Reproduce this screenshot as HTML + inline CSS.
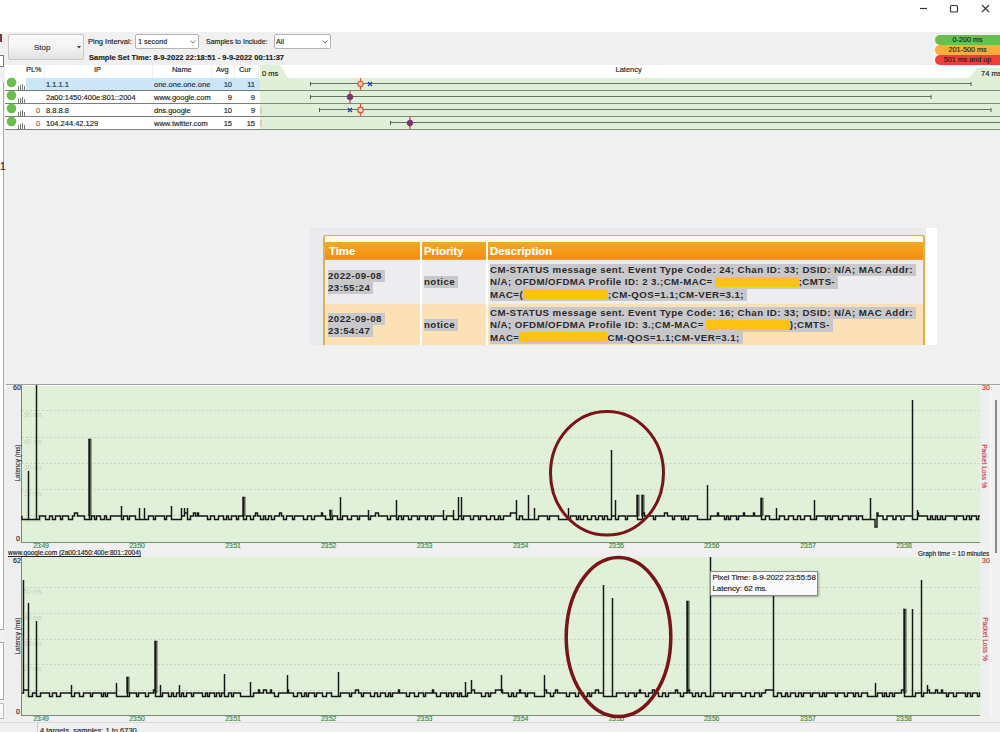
<!DOCTYPE html>
<html><head><meta charset="utf-8">
<style>
*{margin:0;padding:0;box-sizing:border-box}
html,body{width:1000px;height:732px;overflow:hidden;background:#f0f0f0;font-family:"Liberation Sans",sans-serif;color:#222}
.a{position:absolute}
.t{position:absolute;white-space:nowrap;font-size:10px;line-height:12px;-webkit-text-stroke:0.15px currentColor}
.xl{position:absolute;width:30px;text-align:center;font-size:7px;letter-spacing:-0.5px;line-height:9px;color:#3a863a;-webkit-text-stroke:0.1px currentColor}
.gl{stroke:#bfcab7;stroke-width:1;stroke-dasharray:1.5 2.5}
.gll{position:absolute;font-size:6.5px;line-height:8px;color:#c6d0bd;white-space:nowrap}
.row{position:absolute;left:5px;width:255px;height:13px;border-bottom:1px solid #7d7d7d}
.ov{font-family:"Liberation Sans",sans-serif;font-weight:bold;font-size:10.5px;line-height:12.5px;color:#333}
.ol{position:absolute;white-space:nowrap;font-weight:bold;font-size:9.7px;letter-spacing:0.43px;line-height:12.3px;color:#2a2a2a}
.hl{display:inline-block;background:#c8c8cb;height:12.3px}
.yb{display:inline-block;background:#fcc314;height:10px;vertical-align:-1.5px}
</style></head><body>
<!-- title bar -->
<div class="a" style="left:0;top:0;width:1000px;height:32px;background:#fff"></div>
<svg class="a" style="left:0;top:0" width="1000" height="32">
<line x1="920" y1="8.5" x2="927" y2="8.5" stroke="#333" stroke-width="1.2"/>
<rect x="950.5" y="5.5" width="7" height="6.5" rx="1" fill="none" stroke="#333" stroke-width="1.2"/>
<path d="M982,5 L989,12 M989,5 L982,12" stroke="#333" stroke-width="1.1"/>
</svg>
<!-- left strip -->
<div class="a" style="left:0;top:34px;width:2px;height:8px;background:#7a3a3a"></div>
<div class="a" style="left:-2px;top:55px;width:6px;height:12px;background:#fff;border:1px solid #777"></div>
<div class="a" style="left:0;top:82px;width:4px;height:548px;background:#fff;border-right:1px solid #aaa;border-bottom:1px solid #aaa"></div>
<div class="a" style="left:0;top:642px;width:4px;height:58px;background:#fff;border-right:1px solid #aaa;border-top:1px solid #aaa;border-bottom:1px solid #aaa"></div>
<div class="a" style="left:0;top:703px;width:4px;height:16px;background:#f8f8f8;border-right:1px solid #bbb;border-top:1px solid #bbb;border-bottom:1px solid #bbb"></div>
<div class="t" style="left:0;top:161px;font-size:10px">1</div>
<!-- toolbar -->
<div class="a" style="left:8px;top:34px;width:76px;height:26px;border:1px solid #c8c8c8;border-radius:2px;background:linear-gradient(#fafafa,#f4f4f4 50%,#e2e2e2)"></div>
<div class="t" style="left:34px;top:43px;font-size:8px;line-height:10px;color:#333">Stop</div>
<svg class="a" style="left:77px;top:46px" width="5" height="3"><path d="M0,0 L4,0 L2,2.5z" fill="#333"/></svg>
<div class="t" style="left:88px;top:37px;font-size:7.5px;line-height:10px;color:#222">Ping Interval:</div>
<div class="a" style="left:135px;top:34px;width:64px;height:14.5px;background:#fff;border:1px solid #b4b4b4;border-radius:2px"></div>
<div class="t" style="left:138px;top:37px;font-size:7.2px;line-height:10px;color:#222">1 second</div>
<svg class="a" style="left:190px;top:40px" width="7" height="4"><path d="M0.5,0.5 L3,3 L5.5,0.5" fill="none" stroke="#666" stroke-width="0.9"/></svg>
<div class="t" style="left:206px;top:37px;font-size:7px;line-height:10px;color:#222">Samples to Include:</div>
<div class="a" style="left:274px;top:34px;width:57px;height:14.5px;background:#fff;border:1px solid #b4b4b4;border-radius:2px"></div>
<div class="t" style="left:276px;top:37px;font-size:7.2px;line-height:10px;color:#222">All</div>
<svg class="a" style="left:322px;top:40px" width="7" height="4"><path d="M0.5,0.5 L3,3 L5.5,0.5" fill="none" stroke="#666" stroke-width="0.9"/></svg>
<div class="t" style="left:89px;top:53px;font-weight:bold;color:#222;font-size:7.5px;line-height:10px">Sample Set Time: 8-9-2022 22:18:51 - 9-9-2022 00:11:37</div>
<!-- badges -->
<div class="a" style="left:935px;top:35px;width:70px;height:10px;border-radius:5px;background:#6cbd4f"></div>
<div class="a" style="left:935px;top:45px;width:70px;height:10px;border-radius:5px;background:#fbae3c"></div>
<div class="a" style="left:935px;top:55px;width:70px;height:10px;border-radius:5px;background:#ee4038"></div>
<div class="t" style="left:935px;top:34px;width:65px;text-align:center;font-size:7.2px;line-height:11px;color:#222">0-200 ms</div>
<div class="t" style="left:935px;top:44px;width:65px;text-align:center;font-size:7.2px;line-height:11px;color:#222">201-500 ms</div>
<div class="t" style="left:935px;top:54px;width:65px;text-align:center;font-size:7.2px;line-height:11px;color:#222">501 ms and up</div>
<!-- table header -->
<div class="a" style="left:5px;top:65px;width:995px;height:13px;background:#fff"></div>
<div class="a" style="left:44px;top:65px;width:1px;height:13px;background:#eee"></div>
<div class="a" style="left:152px;top:65px;width:1px;height:13px;background:#eee"></div>
<div class="a" style="left:211px;top:65px;width:1px;height:13px;background:#eee"></div>
<div class="a" style="left:234px;top:65px;width:1px;height:13px;background:#eee"></div>
<div class="a" style="left:258px;top:65px;width:1px;height:13px;background:#eee"></div>
<div class="t" style="left:26px;top:63px;font-size:7.4px;line-height:13px;color:#222">PL%</div>
<div class="t" style="left:94px;top:63px;font-size:7.4px;line-height:13px;color:#222">IP</div>
<div class="t" style="left:172px;top:63px;font-size:7.4px;line-height:13px;color:#222">Name</div>
<div class="t" style="left:216px;top:63px;font-size:7.4px;line-height:13px;color:#222">Avg</div>
<div class="t" style="left:239px;top:63px;font-size:7.4px;line-height:13px;color:#222">Cur</div>
<!-- latency area -->
<svg class="a" style="left:0;top:60px" width="1000" height="75">
<path d="M260,5 L280,5 L288,18 L969,18 L977,8 L1000,8 L1000,69 L260,69z" fill="#e0efd8"/>
<line x1="260" y1="30.5" x2="1000" y2="30.5" stroke="#7e8a7a" stroke-width="1"/>
<line x1="260" y1="43.5" x2="1000" y2="43.5" stroke="#7e8a7a" stroke-width="1"/>
<line x1="260" y1="56.5" x2="1000" y2="56.5" stroke="#7e8a7a" stroke-width="1"/>
<line x1="260" y1="69.5" x2="1000" y2="69.5" stroke="#7e8a7a" stroke-width="1"/>
<line x1="310" y1="23.5" x2="971" y2="23.5" stroke="#667466" stroke-width="1"/>
<line x1="310" y1="36.5" x2="931" y2="36.5" stroke="#667466" stroke-width="1"/>
<line x1="319" y1="49.5" x2="991" y2="49.5" stroke="#667466" stroke-width="1"/>
<line x1="390" y1="62.5" x2="1000" y2="62.5" stroke="#667466" stroke-width="1"/>
<path d="M310.5,22 v4 M971,22 v4 M310.5,35 v4 M931,35 v4 M319.5,48 v4 M991,48 v4 M390.5,61 v4" stroke="#555" stroke-width="1"/>
<line x1="261" y1="47" x2="261" y2="54" stroke="#d8a8a0" stroke-width="1"/>
<line x1="261" y1="60" x2="261" y2="67" stroke="#d8a8a0" stroke-width="1"/>
<!-- markers -->
<line x1="360.5" y1="18" x2="360.5" y2="30" stroke="#e05030" stroke-width="1.2"/>
<circle cx="360.5" cy="24" r="2.7" fill="#f8d0b8" stroke="#e05030" stroke-width="1.1"/>
<path d="M368,22 L372,26 M372,22 L368,26" stroke="#2040b0" stroke-width="1.3"/>
<line x1="350" y1="31" x2="350" y2="43" stroke="#c04040" stroke-width="1.2"/>
<circle cx="350" cy="37" r="2.8" fill="#6a3a7a" stroke="#8a3060" stroke-width="1"/>
<path d="M348,48 L352,52 M352,48 L348,52" stroke="#2040b0" stroke-width="1.3"/>
<line x1="360.5" y1="44" x2="360.5" y2="56" stroke="#e05030" stroke-width="1.2"/>
<circle cx="360.5" cy="50" r="2.8" fill="#f8d8c8" stroke="#e05030" stroke-width="1.2"/>
<line x1="410" y1="57" x2="410" y2="69" stroke="#c04040" stroke-width="1.2"/>
<circle cx="410" cy="63" r="2.8" fill="#6a3a7a" stroke="#8a3060" stroke-width="1"/>
</svg>
<div class="t" style="left:262px;top:67px;font-size:7.5px;line-height:13px;color:#222">0 ms</div>
<div class="t" style="left:981px;top:67px;font-size:7.5px;line-height:13px;color:#222">74 ms</div>
<div class="t" style="left:615.5px;top:63px;font-size:7.5px;line-height:13px;color:#222">Latency</div>
<!-- rows -->
<div class="a" style="left:26px;top:78px;width:234px;height:12px;background:#cde6f7"></div>
<div class="a" style="left:5px;top:90px;width:255px;height:1px;background:#7d7d7d"></div>
<div class="a" style="left:5px;top:103px;width:255px;height:1px;background:#7d7d7d"></div>
<div class="a" style="left:5px;top:116px;width:255px;height:1px;background:#7d7d7d"></div>
<div class="a" style="left:5px;top:129px;width:255px;height:1px;background:#7d7d7d"></div>
<div class="a" style="left:5px;top:91px;width:255px;height:12px;background:#fff"></div>
<div class="a" style="left:5px;top:104px;width:255px;height:12px;background:#fff"></div>
<div class="a" style="left:5px;top:117px;width:255px;height:12px;background:#fff"></div>
<div class="a" style="left:5px;top:78px;width:21px;height:12px;background:#fff"></div>
<svg class="a" style="left:0;top:75px" width="30" height="60">
<g fill="#6abf4b"><circle cx="11.5" cy="7.5" r="4.8"/><circle cx="11.5" cy="20.5" r="4.8"/><circle cx="11.5" cy="33.5" r="4.8"/><circle cx="11.5" cy="46.5" r="4.8"/></g>
<g stroke="#777" stroke-width="1">
<path d="M18.5,15 v-4 M20.5,15 v-5 M22.5,15 v-6 M24.5,15 v-4"/>
<path d="M18.5,28 v-4 M20.5,28 v-5 M22.5,28 v-6 M24.5,28 v-4"/>
<path d="M18.5,41 v-4 M20.5,41 v-5 M22.5,41 v-6 M24.5,41 v-4"/>
<path d="M18.5,54 v-4 M20.5,54 v-5 M22.5,54 v-6 M24.5,54 v-4"/>
</g></svg>
<div class="t" style="left:46px;top:78px;font-size:7.5px;line-height:13px;color:#1a3050">1.1.1.1</div>
<div class="t" style="left:154px;top:78px;font-size:7.5px;line-height:13px;color:#1a3050">one.one.one.one</div>
<div class="t" style="left:212px;top:78px;width:20px;text-align:right;font-size:7.5px;line-height:13px;color:#1a3050">10</div>
<div class="t" style="left:235px;top:78px;width:20px;text-align:right;font-size:7.5px;line-height:13px;color:#1a3050">11</div>
<div class="t" style="left:46px;top:91px;font-size:7.5px;line-height:13px;color:#222">2a00:1450:400e:801::2004</div>
<div class="t" style="left:154px;top:91px;font-size:7.5px;line-height:13px;color:#222">www.google.com</div>
<div class="t" style="left:212px;top:91px;width:20px;text-align:right;font-size:7.5px;line-height:13px;color:#222">9</div>
<div class="t" style="left:235px;top:91px;width:20px;text-align:right;font-size:7.5px;line-height:13px;color:#222">9</div>
<div class="t" style="left:36px;top:104px;font-size:7.5px;line-height:13px;color:#a05050">0</div>
<div class="t" style="left:46px;top:104px;font-size:7.5px;line-height:13px;color:#222">8.8.8.8</div>
<div class="t" style="left:154px;top:104px;font-size:7.5px;line-height:13px;color:#222">dns.google</div>
<div class="t" style="left:212px;top:104px;width:20px;text-align:right;font-size:7.5px;line-height:13px;color:#222">10</div>
<div class="t" style="left:235px;top:104px;width:20px;text-align:right;font-size:7.5px;line-height:13px;color:#222">9</div>
<div class="t" style="left:36px;top:117px;font-size:7.5px;line-height:13px;color:#a05050">0</div>
<div class="t" style="left:46px;top:117px;font-size:7.5px;line-height:13px;color:#222">104.244.42.129</div>
<div class="t" style="left:154px;top:117px;font-size:7.5px;line-height:13px;color:#222">www.twitter.com</div>
<div class="t" style="left:212px;top:117px;width:20px;text-align:right;font-size:7.5px;line-height:13px;color:#222">15</div>
<div class="t" style="left:235px;top:117px;width:20px;text-align:right;font-size:7.5px;line-height:13px;color:#222">15</div>

<!-- overlay -->
<div class="a" style="left:310px;top:228px;width:627px;height:117px;background:#e9eaee"></div>
<div class="a" style="left:926px;top:228px;width:11px;height:117px;background:#fff"></div>
<div class="a" style="left:323px;top:235px;width:602px;height:110px;border:2px solid #dcb058;border-top:1.5px solid #cfae5c;border-bottom:none;border-radius:3px 3px 0 0;background:#fffbe6"></div>
<div class="a" style="left:325px;top:242px;width:598px;height:18px;background:linear-gradient(#eeac1f,#f6981a 60%,#f38d12);border-bottom:1px solid #e8a050"></div>
<div class="a" style="left:325px;top:260px;width:598px;height:44px;background:#ededf0"></div>
<div class="a" style="left:325px;top:304px;width:598px;height:41px;background:#fde1b6"></div>
<div class="a" style="left:420px;top:241px;width:2px;height:104px;background:#fff"></div>
<div class="a" style="left:486px;top:241px;width:2px;height:104px;background:#fff"></div>
<div class="t ov" style="left:329px;top:244px;font-size:11.3px;line-height:14px;color:#fff">Time</div>
<div class="t ov" style="left:424px;top:244px;font-size:11.3px;line-height:14px;color:#fff">Priority</div>
<div class="t ov" style="left:490px;top:244px;font-size:11.3px;line-height:14px;color:#fff">Description</div>
<div class="ol" style="left:328px;top:270px"><span class="hl">2022-09-08&nbsp;</span></div>
<div class="ol" style="left:328px;top:282px"><span class="hl">23:55:24&nbsp;</span></div>
<div class="ol" style="left:424px;top:276px"><span class="hl">notice&nbsp;</span></div>
<div class="ol" style="left:490px;top:264px"><span class="hl">CM-STATUS message sent. Event Type Code: 24; Chan ID: 33; DSID: N/A; MAC Addr:&nbsp;</span></div>
<div class="ol" style="left:490px;top:276.3px"><span class="hl">N/A; OFDM/OFDMA Profile ID: 2 3.;CM-MAC=<span class="yb" style="width:84px;margin-left:2px"></span>;CMTS-&nbsp;</span></div>
<div class="ol" style="left:490px;top:288.6px"><span class="hl">MAC=(<span class="yb" style="width:85px"></span>;CM-QOS=1.1;CM-VER=3.1;&nbsp;</span></div>
<div class="ol" style="left:328px;top:313px"><span class="hl">2022-09-08&nbsp;</span></div>
<div class="ol" style="left:328px;top:325px"><span class="hl">23:54:47&nbsp;</span></div>
<div class="ol" style="left:424px;top:319px"><span class="hl">notice&nbsp;</span></div>
<div class="ol" style="left:490px;top:307px"><span class="hl">CM-STATUS message sent. Event Type Code: 16; Chan ID: 33; DSID: N/A; MAC Addr:&nbsp;</span></div>
<div class="ol" style="left:490px;top:319.3px"><span class="hl">N/A; OFDM/OFDMA Profile ID: 3.;CM-MAC=<span class="yb" style="width:84px;margin-left:2px"></span>);CMTS-&nbsp;</span></div>
<div class="ol" style="left:490px;top:331.6px"><span class="hl">MAC=<span class="yb" style="width:88px"></span>CM-QOS=1.1;CM-VER=3.1;&nbsp;</span></div>

<!-- graph 1 -->
<div class="a" style="left:6px;top:384px;width:994px;height:1px;background:#a0a0a0"></div>
<div class="a" style="left:990px;top:385px;width:1px;height:331px;background:#fafafa"></div>
<div class="a" style="left:6px;top:385px;width:984px;height:158px;background:#eeeeee"></div>
<div class="a" style="left:21px;top:385px;width:959px;height:157px;background:#e1f0d9"></div>
<div class="a" style="left:6px;top:385px;width:994px;height:1px;background:#fbfbfb"></div>
<div class="gll" style="left:24px;top:411px">50 ms</div><div class="gll" style="left:24px;top:438px">40 ms</div><div class="gll" style="left:24px;top:464px">30 ms</div><div class="gll" style="left:24px;top:490px">20 ms</div><div class="gll" style="left:24px;top:516px">10 ms</div>
<div class="a" style="left:6px;top:557px;width:984px;height:159px;background:#eeeeee"></div>
<div class="a" style="left:21px;top:557px;width:959px;height:158px;background:#e1f0d9"></div>
<div class="gll" style="left:24px;top:588px">50 ms</div><div class="gll" style="left:24px;top:614px">40 ms</div><div class="gll" style="left:24px;top:640px">30 ms</div><div class="gll" style="left:24px;top:665px">20 ms</div><div class="gll" style="left:24px;top:691px">10 ms</div>
<svg class="a" style="left:0;top:0" width="1000" height="732">
<line x1="22" y1="410.5" x2="980" y2="410.5" class="gl"/><line x1="22" y1="437.5" x2="980" y2="437.5" class="gl"/><line x1="22" y1="463.5" x2="980" y2="463.5" class="gl"/><line x1="22" y1="489.5" x2="980" y2="489.5" class="gl"/><line x1="22" y1="515.5" x2="980" y2="515.5" class="gl"/>
<line x1="22" y1="587.5" x2="980" y2="587.5" class="gl"/><line x1="22" y1="613.5" x2="980" y2="613.5" class="gl"/><line x1="22" y1="639.5" x2="980" y2="639.5" class="gl"/><line x1="22" y1="664.5" x2="980" y2="664.5" class="gl"/><line x1="22" y1="690.5" x2="980" y2="690.5" class="gl"/>
<line x1="21.5" y1="385" x2="21.5" y2="543" stroke="#7a8a7a"/>
<line x1="21" y1="542.5" x2="980" y2="542.5" stroke="#7a8a7a"/>
<line x1="21.5" y1="557" x2="21.5" y2="716" stroke="#7a8a7a"/>
<line x1="21" y1="715.5" x2="980" y2="715.5" stroke="#7a8a7a"/>
</svg>
<div class="t" style="left:13px;top:384px;font-size:7px;line-height:8px;color:#222">60</div>
<div class="t" style="left:16px;top:535px;font-size:7px;line-height:8px;color:#222">0</div>
<div class="t" style="left:982px;top:384px;font-size:7px;line-height:8px;color:#a54040">30</div>
<div class="t" style="left:-7.5px;top:459px;width:50px;text-align:center;font-size:6.4px;line-height:8px;color:#333;transform:rotate(-90deg)">Latency (ms)</div>
<div class="t" style="left:959px;top:462px;width:50px;text-align:center;font-size:6.6px;line-height:8px;color:#c04545;transform:rotate(90deg)">Packet Loss %</div>
<div class="xl" style="left:25.799999999999997px;top:541px">23:49</div><div class="xl" style="left:121.80000000000001px;top:541px">23:50</div><div class="xl" style="left:217.8px;top:541px">23:51</div><div class="xl" style="left:313.4px;top:541px">23:52</div><div class="xl" style="left:409.3px;top:541px">23:53</div><div class="xl" style="left:505.4px;top:541px">23:54</div><div class="xl" style="left:601.2px;top:541px">23:55</div><div class="xl" style="left:696.4px;top:541px">23:56</div><div class="xl" style="left:792.8px;top:541px">23:57</div><div class="xl" style="left:888.8px;top:541px">23:58</div>
<div class="t" style="left:8px;top:548px;font-size:6.5px;line-height:9px;color:#222;text-decoration:underline">www.google.com (2a00:1450:400e:801::2004)</div>
<div class="t" style="left:918px;top:549px;font-size:6.5px;line-height:9px;color:#222">Graph time = 10 minutes</div>
<!-- graph 2 -->
<div class="t" style="left:13px;top:557px;font-size:7px;line-height:8px;color:#222">62</div>
<div class="t" style="left:16px;top:708px;font-size:7px;line-height:8px;color:#222">0</div>
<div class="t" style="left:982px;top:557px;font-size:7px;line-height:8px;color:#a54040">30</div>
<div class="t" style="left:-7.5px;top:631.7px;width:50px;text-align:center;font-size:6.4px;line-height:8px;color:#333;transform:rotate(-90deg)">Latency (ms)</div>
<div class="t" style="left:959.5px;top:634.7px;width:50px;text-align:center;font-size:6.6px;line-height:8px;color:#c04545;transform:rotate(90deg)">Packet Loss %</div>
<div class="xl" style="left:25.799999999999997px;top:714px">23:49</div><div class="xl" style="left:121.80000000000001px;top:714px">23:50</div><div class="xl" style="left:217.8px;top:714px">23:51</div><div class="xl" style="left:313.4px;top:714px">23:52</div><div class="xl" style="left:409.3px;top:714px">23:53</div><div class="xl" style="left:505.4px;top:714px">23:54</div><div class="xl" style="left:601.2px;top:714px">23:55</div><div class="xl" style="left:696.4px;top:714px">23:56</div><div class="xl" style="left:792.8px;top:714px">23:57</div><div class="xl" style="left:888.8px;top:714px">23:58</div>
<svg class="a" style="left:0;top:0" width="1000" height="732">
<g class="gls"></g>
<rect x="88.4" y="439" width="2.7" height="77.0" fill="#858b80" stroke="#333" stroke-width="0.6"/><rect x="242.4" y="497" width="2.7" height="19.0" fill="#858b80" stroke="#333" stroke-width="0.6"/><rect x="329.4" y="510" width="2.7" height="6.0" fill="#858b80" stroke="#333" stroke-width="0.6"/><rect x="636.4" y="495" width="2.7" height="21.0" fill="#858b80" stroke="#333" stroke-width="0.6"/><rect x="641.4" y="495" width="2.7" height="21.0" fill="#858b80" stroke="#333" stroke-width="0.6"/><rect x="760.4" y="498" width="2.7" height="18.0" fill="#858b80" stroke="#333" stroke-width="0.6"/><rect x="126.4" y="677" width="2.7" height="16.0" fill="#858b80" stroke="#333" stroke-width="0.6"/><rect x="154.4" y="641" width="2.7" height="52.0" fill="#858b80" stroke="#333" stroke-width="0.6"/><rect x="686.4" y="601" width="2.7" height="92.0" fill="#858b80" stroke="#333" stroke-width="0.6"/><rect x="903.4" y="609" width="2.7" height="84.0" fill="#858b80" stroke="#333" stroke-width="0.6"/>
<path d="M22.0,516.0 L22.0,519.5 L24.0,519.5 L28.5,519.5 L28.5,471.0 L28.5,516.0 L28.5,516.0 L28.5,519.5 L30.5,519.5 L36.5,519.5 L36.5,385.0 L36.5,516.0 L36.5,516.0 L36.5,519.5 L39.5,519.5 L39.5,516.0 L45.5,516.0 L45.5,519.5 L49.5,519.5 L49.5,516.0 L52.5,516.0 L52.5,519.5 L55.5,519.5 L55.5,516.0 L60.5,516.0 L60.5,519.5 L62.5,519.5 L62.5,516.0 L68.5,516.0 L68.5,519.5 L72.5,519.5 L72.5,516.0 L74.5,516.0 L74.5,513.0 L77.5,513.0 L77.5,516.0 L84.5,516.0 L84.5,519.5 L86.5,519.5 L89.5,519.5 L89.5,439.0 L89.5,516.0 L89.5,516.0 L89.5,519.5 L91.5,519.5 L91.5,516.0 L94.5,516.0 L94.5,519.5 L96.5,519.5 L96.5,516.0 L100.5,516.0 L100.5,519.5 L104.5,519.5 L104.5,516.0 L106.5,516.0 L106.5,519.5 L110.5,519.5 L110.5,516.0 L119.5,516.0 L121.5,516.0 L121.5,506.0 L121.5,516.0 L121.5,516.0 L121.5,519.5 L123.5,519.5 L123.5,516.0 L127.5,516.0 L127.5,519.5 L129.5,519.5 L129.5,516.0 L135.5,516.0 L135.5,519.5 L137.5,519.5 L139.5,519.5 L139.5,508.0 L139.5,516.0 L139.5,516.0 L139.5,519.5 L142.5,519.5 L144.5,519.5 L144.5,508.0 L144.5,516.0 L144.5,516.0 L144.5,519.5 L148.5,519.5 L148.5,516.0 L153.5,516.0 L153.5,519.5 L155.5,519.5 L155.5,516.0 L164.5,516.0 L164.5,519.5 L166.5,519.5 L166.5,516.0 L168.5,516.0 L171.5,516.0 L171.5,506.0 L171.5,516.0 L171.5,516.0 L171.5,519.5 L174.5,519.5 L181.5,519.5 L181.5,508.0 L181.5,516.0 L181.5,516.0 L184.5,516.0 L184.5,508.0 L184.5,516.0 L184.5,516.0 L184.5,513.0 L185.5,513.0 L187.5,513.0 L187.5,508.0 L187.5,516.0 L187.5,516.0 L187.5,519.5 L190.5,519.5 L190.5,516.0 L193.5,516.0 L193.5,513.0 L195.5,513.0 L195.5,516.0 L197.5,516.0 L197.5,513.0 L198.5,513.0 L198.5,516.0 L207.5,516.0 L207.5,519.5 L210.5,519.5 L210.5,516.0 L214.5,516.0 L214.5,519.5 L218.5,519.5 L218.5,516.0 L223.5,516.0 L223.5,519.5 L226.5,519.5 L226.5,516.0 L228.5,516.0 L228.5,519.5 L231.5,519.5 L231.5,516.0 L236.5,516.0 L236.5,519.5 L238.5,519.5 L238.5,516.0 L240.5,516.0 L243.5,516.0 L243.5,497.0 L243.5,516.0 L243.5,516.0 L243.5,519.5 L246.5,519.5 L246.5,516.0 L250.5,516.0 L250.5,519.5 L253.5,519.5 L253.5,516.0 L255.5,516.0 L255.5,513.0 L257.5,513.0 L257.5,516.0 L260.5,516.0 L260.5,519.5 L263.5,519.5 L263.5,516.0 L265.5,516.0 L265.5,519.5 L268.5,519.5 L268.5,516.0 L271.5,516.0 L271.5,519.5 L274.5,519.5 L274.5,516.0 L279.5,516.0 L279.5,513.0 L281.5,513.0 L281.5,516.0 L283.5,516.0 L283.5,519.5 L286.5,519.5 L286.5,516.0 L292.5,516.0 L292.5,519.5 L294.5,519.5 L294.5,516.0 L303.5,516.0 L303.5,519.5 L307.5,519.5 L307.5,516.0 L311.5,516.0 L311.5,519.5 L314.5,519.5 L314.5,516.0 L321.5,516.0 L321.5,513.0 L322.5,513.0 L322.5,516.0 L325.5,516.0 L325.5,519.5 L327.5,519.5 L330.5,519.5 L330.5,510.0 L330.5,516.0 L330.5,516.0 L330.5,519.5 L332.5,519.5 L332.5,516.0 L337.5,516.0 L337.5,519.5 L339.5,519.5 L340.5,519.5 L340.5,497.0 L340.5,516.0 L340.5,516.0 L340.5,519.5 L342.5,519.5 L342.5,516.0 L347.5,516.0 L347.5,519.5 L351.5,519.5 L351.5,516.0 L357.5,516.0 L357.5,519.5 L359.5,519.5 L359.5,516.0 L366.5,516.0 L368.5,516.0 L368.5,510.0 L368.5,516.0 L368.5,516.0 L368.5,519.5 L370.5,519.5 L370.5,516.0 L375.5,516.0 L375.5,513.0 L378.5,513.0 L378.5,516.0 L387.5,516.0 L387.5,519.5 L390.5,519.5 L390.5,516.0 L395.5,516.0 L396.5,516.0 L396.5,500.0 L396.5,516.0 L396.5,516.0 L396.5,519.5 L398.5,519.5 L398.5,516.0 L401.5,516.0 L401.5,519.5 L403.5,519.5 L403.5,516.0 L408.5,516.0 L408.5,519.5 L411.5,519.5 L411.5,516.0 L417.5,516.0 L417.5,519.5 L419.5,519.5 L419.5,516.0 L425.5,516.0 L425.5,519.5 L427.5,519.5 L427.5,516.0 L431.5,516.0 L431.5,519.5 L433.5,519.5 L433.5,516.0 L442.5,516.0 L443.5,516.0 L443.5,510.0 L443.5,516.0 L443.5,516.0 L443.5,519.5 L446.5,519.5 L446.5,516.0 L450.5,516.0 L453.5,516.0 L453.5,510.0 L453.5,516.0 L453.5,516.0 L453.5,519.5 L456.5,519.5 L458.5,519.5 L458.5,497.0 L458.5,516.0 L458.5,516.0 L461.5,516.0 L461.5,497.0 L461.5,516.0 L461.5,516.0 L461.5,519.5 L463.5,519.5 L463.5,516.0 L470.5,516.0 L470.5,519.5 L473.5,519.5 L473.5,516.0 L478.5,516.0 L478.5,519.5 L480.5,519.5 L480.5,516.0 L486.5,516.0 L486.5,519.5 L490.5,519.5 L490.5,516.0 L494.5,516.0 L494.5,519.5 L498.5,519.5 L498.5,516.0 L500.5,516.0 L500.5,519.5 L503.5,519.5 L503.5,516.0 L510.5,516.0 L510.5,513.0 L513.5,513.0 L516.5,513.0 L516.5,500.0 L516.5,516.0 L516.5,516.0 L516.5,519.5 L519.5,519.5 L519.5,516.0 L522.5,516.0 L522.5,519.5 L524.5,519.5 L528.5,519.5 L528.5,495.0 L528.5,516.0 L528.5,516.0 L528.5,519.5 L532.5,519.5 L534.5,519.5 L534.5,508.0 L534.5,516.0 L534.5,516.0 L534.5,519.5 L538.5,519.5 L538.5,516.0 L547.5,516.0 L547.5,519.5 L549.5,519.5 L549.5,516.0 L558.5,516.0 L558.5,519.5 L561.5,519.5 L568.5,519.5 L568.5,508.0 L568.5,516.0 L568.5,516.0 L568.5,519.5 L570.5,519.5 L570.5,516.0 L576.5,516.0 L576.5,519.5 L578.5,519.5 L578.5,516.0 L580.5,516.0 L580.5,519.5 L583.5,519.5 L583.5,516.0 L587.5,516.0 L587.5,519.5 L591.5,519.5 L591.5,516.0 L595.5,516.0 L595.5,519.5 L598.5,519.5 L598.5,516.0 L602.5,516.0 L602.5,519.5 L604.5,519.5 L604.5,516.0 L607.5,516.0 L607.5,519.5 L610.5,519.5 L611.5,519.5 L611.5,450.0 L611.5,516.0 L611.5,516.0 L615.5,516.0 L615.5,500.0 L615.5,516.0 L615.5,516.0 L615.5,519.5 L618.5,519.5 L618.5,516.0 L625.5,516.0 L625.5,519.5 L627.5,519.5 L627.5,516.0 L636.5,516.0 L637.5,516.0 L637.5,495.0 L637.5,516.0 L637.5,516.0 L637.5,519.5 L639.5,519.5 L642.5,519.5 L642.5,495.0 L642.5,516.0 L642.5,516.0 L642.5,513.0 L644.5,513.0 L644.5,516.0 L653.5,516.0 L653.5,519.5 L655.5,519.5 L655.5,516.0 L664.5,516.0 L664.5,513.0 L667.5,513.0 L667.5,516.0 L672.5,516.0 L672.5,519.5 L674.5,519.5 L674.5,516.0 L681.5,516.0 L681.5,519.5 L683.5,519.5 L683.5,516.0 L685.5,516.0 L685.5,519.5 L688.5,519.5 L688.5,516.0 L697.5,516.0 L697.5,519.5 L701.5,519.5 L707.5,519.5 L707.5,485.0 L707.5,516.0 L707.5,516.0 L707.5,519.5 L710.5,519.5 L710.5,516.0 L717.5,516.0 L717.5,513.0 L718.5,513.0 L718.5,516.0 L724.5,516.0 L724.5,519.5 L726.5,519.5 L726.5,516.0 L728.5,516.0 L728.5,519.5 L730.5,519.5 L730.5,516.0 L736.5,516.0 L736.5,519.5 L738.5,519.5 L738.5,516.0 L743.5,516.0 L743.5,513.0 L744.5,513.0 L744.5,516.0 L753.5,516.0 L753.5,513.0 L754.5,513.0 L754.5,516.0 L758.5,516.0 L761.5,516.0 L761.5,498.0 L761.5,516.0 L761.5,516.0 L761.5,519.5 L765.5,519.5 L765.5,516.0 L769.5,516.0 L769.5,519.5 L772.5,519.5 L776.5,519.5 L776.5,508.0 L776.5,516.0 L776.5,516.0 L776.5,519.5 L779.5,519.5 L779.5,516.0 L784.5,516.0 L784.5,519.5 L788.5,519.5 L788.5,516.0 L793.5,516.0 L793.5,519.5 L797.5,519.5 L797.5,516.0 L800.5,516.0 L800.5,519.5 L804.5,519.5 L804.5,516.0 L810.5,516.0 L810.5,519.5 L813.5,519.5 L814.5,519.5 L814.5,500.0 L814.5,516.0 L814.5,516.0 L814.5,519.5 L816.5,519.5 L816.5,516.0 L825.5,516.0 L825.5,519.5 L827.5,519.5 L827.5,516.0 L830.5,516.0 L830.5,519.5 L832.5,519.5 L832.5,516.0 L838.5,516.0 L838.5,519.5 L842.5,519.5 L842.5,516.0 L848.5,516.0 L848.5,519.5 L850.5,519.5 L850.5,516.0 L856.5,516.0 L856.5,519.5 L858.5,519.5 L858.5,516.0 L862.5,516.0 L862.5,519.5 L864.5,519.5 L870.5,519.5 L870.5,498.0 L870.5,516.0 L870.5,516.0 L870.5,519.5 L872.5,519.5 L875.0,519.5 L875.0,527.0 L877.0,527.0 L877.0,516.0 L877.0,513.0 L878.0,513.0 L878.0,516.0 L883.0,516.0 L883.0,519.5 L887.0,519.5 L887.0,516.0 L893.0,516.0 L893.0,519.5 L896.0,519.5 L896.0,516.0 L901.0,516.0 L901.0,519.5 L904.0,519.5 L904.0,516.0 L910.0,516.0 L912.5,516.0 L912.5,400.0 L912.5,516.0 L912.5,516.0 L912.5,519.5 L915.5,519.5 L917.5,519.5 L917.5,510.0 L917.5,516.0 L917.5,516.0 L917.5,513.0 L918.5,513.0 L918.5,516.0 L927.5,516.0 L927.5,519.5 L930.5,519.5 L930.5,516.0 L932.5,516.0 L932.5,519.5 L935.5,519.5 L935.5,516.0 L937.5,516.0 L937.5,519.5 L940.5,519.5 L940.5,516.0 L942.5,516.0 L942.5,519.5 L945.5,519.5 L945.5,516.0 L954.5,516.0 L954.5,519.5 L956.5,519.5 L956.5,516.0 L963.5,516.0 L963.5,519.5 L966.5,519.5 L966.5,516.0 L969.5,516.0 L969.5,519.5 L971.5,519.5 L971.5,516.0 L976.5,516.0 L976.5,519.5 L978.5,519.5 L978.5,516.0 L980.0,516.0" fill="none" stroke="#151515" stroke-width="1.45" stroke-linejoin="miter"/>
<path d="M22.0,693.0 L23.5,693.0 L23.5,580.0 L23.5,693.0 L23.5,693.0 L23.5,690.0 L25.5,690.0 L28.5,690.0 L28.5,603.0 L28.5,693.0 L28.5,693.0 L28.5,696.5 L32.5,696.5 L32.5,693.0 L35.5,693.0 L36.5,693.0 L36.5,621.0 L36.5,693.0 L36.5,693.0 L36.5,696.5 L40.5,696.5 L40.5,693.0 L49.5,693.0 L49.5,696.5 L52.5,696.5 L52.5,693.0 L56.5,693.0 L56.5,696.5 L60.5,696.5 L60.5,693.0 L69.5,693.0 L71.5,693.0 L71.5,685.0 L71.5,693.0 L71.5,693.0 L71.5,696.5 L74.5,696.5 L74.5,693.0 L79.5,693.0 L79.5,696.5 L83.5,696.5 L83.5,693.0 L90.5,693.0 L90.5,696.5 L92.5,696.5 L92.5,693.0 L101.5,693.0 L101.5,696.5 L103.5,696.5 L103.5,693.0 L105.5,693.0 L105.5,696.5 L107.5,696.5 L107.5,693.0 L113.5,693.0 L116.5,693.0 L116.5,683.0 L116.5,693.0 L116.5,693.0 L116.5,696.5 L120.5,696.5 L127.5,696.5 L127.5,677.0 L127.5,693.0 L127.5,693.0 L127.5,696.5 L129.5,696.5 L129.5,693.0 L136.5,693.0 L136.5,696.5 L138.5,696.5 L138.5,693.0 L145.5,693.0 L145.5,696.5 L148.5,696.5 L148.5,693.0 L153.5,693.0 L153.5,690.0 L154.5,690.0 L155.5,690.0 L155.5,641.0 L155.5,693.0 L155.5,693.0 L155.5,696.5 L157.5,696.5 L160.5,696.5 L160.5,685.0 L160.5,693.0 L160.5,693.0 L160.5,696.5 L162.5,696.5 L162.5,693.0 L168.5,693.0 L168.5,696.5 L171.5,696.5 L171.5,693.0 L173.5,693.0 L173.5,696.5 L176.5,696.5 L176.5,693.0 L178.5,693.0 L179.5,693.0 L179.5,685.0 L179.5,693.0 L179.5,693.0 L179.5,696.5 L181.5,696.5 L181.5,693.0 L183.5,693.0 L183.5,696.5 L186.5,696.5 L186.5,693.0 L191.5,693.0 L191.5,696.5 L193.5,696.5 L193.5,693.0 L202.5,693.0 L202.5,696.5 L205.5,696.5 L205.5,693.0 L207.5,693.0 L207.5,696.5 L209.5,696.5 L209.5,693.0 L214.5,693.0 L214.5,696.5 L216.5,696.5 L216.5,693.0 L219.5,693.0 L219.5,696.5 L221.5,696.5 L221.5,693.0 L223.5,693.0 L224.5,693.0 L224.5,674.0 L224.5,693.0 L224.5,693.0 L224.5,696.5 L228.5,696.5 L228.5,693.0 L231.5,693.0 L231.5,696.5 L233.5,696.5 L233.5,693.0 L240.5,693.0 L240.5,696.5 L243.5,696.5 L250.5,696.5 L250.5,682.0 L250.5,693.0 L250.5,693.0 L250.5,696.5 L253.5,696.5 L253.5,693.0 L258.5,693.0 L258.5,690.0 L259.5,690.0 L259.5,693.0 L263.5,693.0 L263.5,690.0 L266.5,690.0 L266.5,693.0 L270.5,693.0 L270.5,690.0 L271.5,690.0 L271.5,693.0 L274.5,693.0 L274.5,696.5 L278.5,696.5 L278.5,693.0 L285.5,693.0 L287.5,693.0 L287.5,675.0 L287.5,693.0 L287.5,693.0 L287.5,690.0 L288.5,690.0 L288.5,693.0 L293.5,693.0 L293.5,696.5 L297.5,696.5 L297.5,693.0 L301.5,693.0 L301.5,696.5 L304.5,696.5 L304.5,693.0 L306.5,693.0 L306.5,696.5 L308.5,696.5 L308.5,693.0 L314.5,693.0 L314.5,696.5 L316.5,696.5 L316.5,693.0 L322.5,693.0 L322.5,696.5 L326.5,696.5 L326.5,693.0 L331.5,693.0 L331.5,696.5 L335.5,696.5 L338.5,696.5 L338.5,672.0 L338.5,693.0 L338.5,693.0 L338.5,696.5 L340.5,696.5 L340.5,693.0 L349.5,693.0 L349.5,696.5 L351.5,696.5 L351.5,693.0 L355.5,693.0 L355.5,690.0 L358.5,690.0 L358.5,693.0 L361.5,693.0 L361.5,696.5 L363.5,696.5 L363.5,693.0 L370.5,693.0 L370.5,696.5 L374.5,696.5 L374.5,693.0 L377.5,693.0 L377.5,696.5 L380.5,696.5 L380.5,693.0 L385.5,693.0 L385.5,696.5 L388.5,696.5 L388.5,693.0 L390.5,693.0 L390.5,696.5 L392.5,696.5 L392.5,693.0 L398.5,693.0 L398.5,690.0 L399.5,690.0 L399.5,693.0 L406.5,693.0 L406.5,696.5 L409.5,696.5 L409.5,693.0 L414.5,693.0 L414.5,696.5 L418.5,696.5 L418.5,693.0 L423.5,693.0 L423.5,696.5 L425.5,696.5 L425.5,693.0 L432.5,693.0 L432.5,690.0 L433.5,690.0 L433.5,693.0 L436.5,693.0 L436.5,696.5 L440.5,696.5 L440.5,693.0 L446.5,693.0 L446.5,696.5 L448.5,696.5 L448.5,693.0 L451.5,693.0 L451.5,696.5 L453.5,696.5 L453.5,693.0 L457.5,693.0 L457.5,696.5 L459.5,696.5 L459.5,693.0 L461.5,693.0 L461.5,696.5 L464.5,696.5 L465.5,696.5 L465.5,682.0 L465.5,693.0 L465.5,693.0 L465.5,696.5 L467.5,696.5 L467.5,693.0 L469.5,693.0 L471.5,693.0 L471.5,680.0 L471.5,693.0 L471.5,693.0 L471.5,690.0 L474.5,690.0 L474.5,693.0 L481.5,693.0 L481.5,696.5 L485.5,696.5 L485.5,693.0 L488.5,693.0 L488.5,696.5 L490.5,696.5 L490.5,693.0 L495.5,693.0 L495.5,690.0 L498.5,690.0 L501.5,690.0 L501.5,675.0 L501.5,693.0 L501.5,693.0 L501.5,690.0 L502.5,690.0 L502.5,693.0 L508.5,693.0 L508.5,696.5 L511.5,696.5 L511.5,693.0 L513.5,693.0 L513.5,696.5 L516.5,696.5 L516.5,693.0 L519.5,693.0 L519.5,690.0 L520.5,690.0 L520.5,693.0 L525.5,693.0 L525.5,696.5 L527.5,696.5 L527.5,693.0 L534.5,693.0 L534.5,696.5 L536.5,696.5 L544.5,696.5 L544.5,675.0 L544.5,693.0 L544.5,693.0 L544.5,690.0 L546.5,690.0 L546.5,693.0 L550.5,693.0 L550.5,696.5 L553.5,696.5 L553.5,693.0 L555.5,693.0 L555.5,690.0 L557.5,690.0 L557.5,693.0 L566.5,693.0 L566.5,696.5 L569.5,696.5 L569.5,693.0 L575.5,693.0 L575.5,696.5 L578.5,696.5 L578.5,693.0 L583.5,693.0 L583.5,696.5 L587.5,696.5 L587.5,693.0 L589.5,693.0 L589.5,696.5 L591.5,696.5 L591.5,693.0 L595.5,693.0 L595.5,690.0 L598.5,690.0 L598.5,693.0 L602.5,693.0 L603.5,693.0 L603.5,585.0 L603.5,693.0 L603.5,693.0 L603.5,696.5 L606.5,696.5 L612.5,696.5 L612.5,598.0 L612.5,693.0 L612.5,693.0 L612.5,696.5 L616.5,696.5 L616.5,693.0 L625.5,693.0 L625.5,696.5 L628.5,696.5 L628.5,693.0 L634.5,693.0 L634.5,696.5 L636.5,696.5 L636.5,693.0 L639.5,693.0 L639.5,690.0 L640.5,690.0 L640.5,693.0 L645.5,693.0 L645.5,696.5 L648.5,696.5 L648.5,693.0 L652.5,693.0 L652.5,690.0 L654.5,690.0 L654.5,693.0 L658.5,693.0 L658.5,696.5 L662.5,696.5 L662.5,693.0 L665.5,693.0 L665.5,696.5 L668.5,696.5 L668.5,693.0 L675.5,693.0 L675.5,690.0 L677.5,690.0 L677.5,693.0 L680.5,693.0 L680.5,696.5 L683.5,696.5 L683.5,693.0 L686.5,693.0 L687.5,693.0 L687.5,601.0 L687.5,693.0 L687.5,693.0 L687.5,690.0 L689.5,690.0 L689.5,693.0 L692.5,693.0 L692.5,696.5 L695.5,696.5 L695.5,693.0 L698.5,693.0 L698.5,696.5 L701.5,696.5 L701.5,693.0 L705.5,693.0 L705.5,696.5 L707.5,696.5 L710.5,696.5 L710.5,557.0 L710.5,693.0 L710.5,693.0 L710.5,696.5 L713.5,696.5 L713.5,693.0 L722.5,693.0 L722.5,696.5 L725.5,696.5 L725.5,693.0 L730.5,693.0 L730.5,696.5 L732.5,696.5 L732.5,693.0 L741.5,693.0 L741.5,696.5 L745.5,696.5 L745.5,693.0 L750.5,693.0 L750.5,696.5 L754.5,696.5 L754.5,693.0 L759.5,693.0 L759.5,696.5 L761.5,696.5 L761.5,693.0 L765.5,693.0 L765.5,690.0 L766.5,690.0 L773.5,690.0 L773.5,590.0 L773.5,693.0 L773.5,693.0 L773.5,696.5 L777.5,696.5 L777.5,693.0 L781.5,693.0 L781.5,696.5 L785.5,696.5 L785.5,693.0 L787.5,693.0 L787.5,696.5 L790.5,696.5 L790.5,693.0 L795.5,693.0 L795.5,696.5 L798.5,696.5 L798.5,693.0 L801.5,693.0 L801.5,696.5 L803.5,696.5 L803.5,693.0 L810.5,693.0 L810.5,696.5 L812.5,696.5 L812.5,693.0 L819.5,693.0 L819.5,696.5 L822.5,696.5 L822.5,693.0 L824.5,693.0 L824.5,696.5 L826.5,696.5 L826.5,693.0 L835.5,693.0 L835.5,696.5 L837.5,696.5 L837.5,693.0 L844.5,693.0 L844.5,696.5 L847.5,696.5 L847.5,693.0 L853.5,693.0 L853.5,696.5 L855.5,696.5 L855.5,693.0 L858.5,693.0 L858.5,696.5 L861.5,696.5 L861.5,693.0 L867.5,693.0 L867.5,696.5 L871.5,696.5 L875.5,696.5 L875.5,683.0 L875.5,693.0 L875.5,693.0 L875.5,696.5 L877.5,696.5 L877.5,693.0 L882.5,693.0 L882.5,696.5 L884.5,696.5 L884.5,693.0 L886.5,693.0 L886.5,696.5 L889.5,696.5 L889.5,693.0 L892.5,693.0 L892.5,696.5 L894.5,696.5 L894.5,693.0 L901.5,693.0 L901.5,690.0 L902.5,690.0 L904.5,690.0 L904.5,609.0 L904.5,693.0 L904.5,693.0 L904.5,696.5 L908.5,696.5 L912.5,696.5 L912.5,609.0 L912.5,693.0 L912.5,693.0 L912.5,696.5 L915.5,696.5 L915.5,693.0 L920.5,693.0 L921.5,693.0 L921.5,580.0 L921.5,693.0 L921.5,693.0 L921.5,696.5 L923.5,696.5 L923.5,693.0 L926.5,693.0 L927.5,693.0 L927.5,685.0 L927.5,693.0 L927.5,693.0 L927.5,690.0 L929.5,690.0 L929.5,693.0 L935.5,693.0 L935.5,690.0 L937.5,690.0 L937.5,693.0 L941.5,693.0 L941.5,690.0 L942.5,690.0 L942.5,693.0 L946.5,693.0 L946.5,696.5 L948.5,696.5 L948.5,693.0 L953.5,693.0 L953.5,696.5 L956.5,696.5 L956.5,693.0 L965.5,693.0 L965.5,696.5 L967.5,696.5 L967.5,693.0 L970.5,693.0 L970.5,696.5 L972.5,696.5 L972.5,693.0 L977.5,693.0 L977.5,696.5 L979.5,696.5 L979.5,693.0 L980.0,693.0" fill="none" stroke="#151515" stroke-width="1.45" stroke-linejoin="miter"/>
<ellipse cx="607" cy="473.3" rx="56.5" ry="61.8" fill="none" stroke="#7a1418" stroke-width="3"/>
<ellipse cx="618.5" cy="637" rx="52.3" ry="79.6" fill="none" stroke="#7a1418" stroke-width="3.5"/>
</svg>
<!-- tooltip -->
<div class="a" style="left:710px;top:571px;width:108px;height:25px;background:#fafafa;border:1px solid #8a8a8a;box-shadow:1px 1px 2px rgba(0,0,0,.3)"></div>
<div class="t" style="left:712.5px;top:573px;font-size:8px;letter-spacing:-0.12px;line-height:10.5px;color:#222">Pixel Time: 8-9-2022 23:55:58<br>Latency: 62 ms.</div>
<div class="a" style="left:995px;top:400px;width:2px;height:153px;background:#888"></div>
<!-- status -->
<div class="a" style="left:0;top:722px;width:1000px;height:10px;background:#f0f0f0;border-top:1px solid #ddd"></div>
<div class="a" style="left:37px;top:723px;width:1px;height:9px;background:#ccc"></div>
<div class="t" style="left:40px;top:724px;font-size:7.5px;line-height:13px;color:#222">4 targets, samples: 1 to 6730</div>
</body></html>
